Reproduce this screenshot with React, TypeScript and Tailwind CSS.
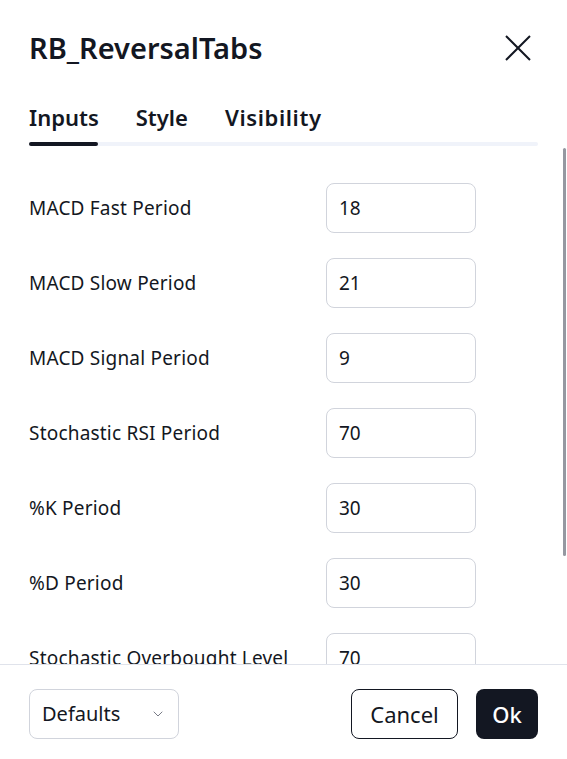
import { ChevronDown } from 'lucide-react';

const ROWS = [
  { label: 'MACD Fast Period', value: '18' },
  { label: 'MACD Slow Period', value: '21' },
  { label: 'MACD Signal Period', value: '9' },
  { label: 'Stochastic RSI Period', value: '70' },
  { label: '%K Period', value: '30' },
  { label: '%D Period', value: '30' },
  { label: 'Stochastic Overbought Level', value: '70' },
];

export default function App() {
  return (
    <div
      className="relative w-[567px] h-[759px] bg-white text-[#131722] flex flex-col overflow-hidden"
      style={{ fontFamily: '"Noto Sans", "Open Sans", sans-serif' }}
    >
      {/* Header */}
      <div className="h-[96px] flex items-center justify-between pl-[29px] pr-[36px] shrink-0">
        <h1 className="text-[29px] leading-[36px] font-semibold">RB_ReversalTabs</h1>
        <button className="w-[26px] h-[26px] flex items-center justify-center">
          <svg width="26" height="26" viewBox="0 0 26 26" fill="none" stroke="#131722" strokeWidth="2">
            <path d="M1 1l24 24M25 1L1 25" />
          </svg>
        </button>
      </div>

      {/* Tabs */}
      <div className="px-[29px] shrink-0">
        <div className="h-[43px] flex items-center gap-[37px] text-[22px] font-semibold">
          <span>Inputs</span>
          <span>Style</span>
          <span className="tracking-[0.6px]">Visibility</span>
        </div>
        <div className="mt-[3px] h-[4px] w-[509px] rounded-full bg-[#f0f3fa] relative">
          <div className="absolute left-0 top-0 h-[4px] w-[69px] rounded-full bg-[#131722]" />
        </div>
      </div>

      {/* Inputs */}
      <div className="flex-1 overflow-hidden pt-[37px] px-[29px]">
        <div className="flex flex-col gap-[25px]">
          {ROWS.map((r) => (
            <div key={r.label} className="flex items-center h-[50px]">
              <span className="w-[297px] text-[19px] tracking-[0.2px] whitespace-nowrap">{r.label}</span>
              <div className="w-[150px] h-[50px] rounded-[8px] border border-[#d1d4dc] flex items-center px-[12px] text-[19px]">
                {r.value}
              </div>
            </div>
          ))}
        </div>
      </div>

      {/* Scrollbar */}
      <div className="absolute right-[1px] top-[148px] h-[408px] w-[3px] rounded-full bg-[#9598a1]" />

      {/* Footer */}
      <div className="shrink-0 border-t border-[#e0e3eb] h-[95px] pt-[24px] px-[29px] flex items-start justify-between">
        <div className="w-[150px] h-[50px] rounded-[8px] border border-[#d1d4dc] flex items-center justify-between pl-[12px] pr-[12px] text-[20px] leading-[28px]">
          <span>Defaults</span>
          <ChevronDown size={16} strokeWidth={1.5} className="text-[#787b86]" />
        </div>
        <div className="flex gap-[18px]">
          <button className="h-[50px] w-[107px] rounded-[8px] border border-[#131722] bg-white text-[22px] leading-[28px]">Cancel</button>
          <button className="h-[50px] w-[62px] rounded-[8px] bg-[#131722] text-white text-[22px] leading-[28px] font-medium">Ok</button>
        </div>
      </div>
    </div>
  );
}
